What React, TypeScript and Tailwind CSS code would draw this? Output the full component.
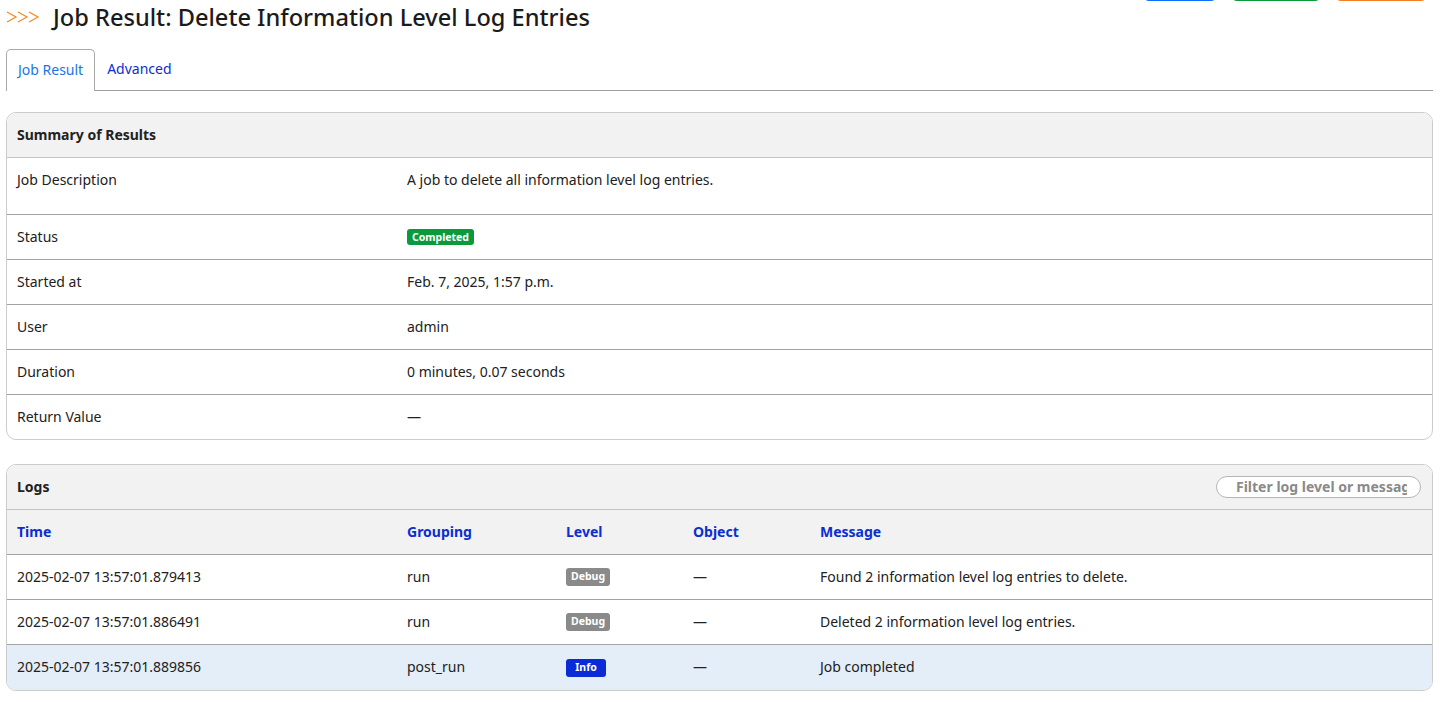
import React from "react";

const font = { fontFamily: '"Noto Sans", "Open Sans", sans-serif' };

function Badge({ children, color, w }: { children: React.ReactNode; color: string; w: string }) {
  return (
    <span className={`inline-flex items-center justify-center rounded-[3px] text-[10.5px] font-bold text-white ${color} ${w}`}>
      {children}
    </span>
  );
}

const summaryRows: { label: string; value: React.ReactNode; tall?: boolean }[] = [
  { label: "Job Description", value: "A job to delete all information level log entries.", tall: true },
  { label: "Status", value: <Badge color="bg-[#0b9a3b]" w="w-[67px] h-[16px]">Completed</Badge> },
  { label: "Started at", value: "Feb. 7, 2025, 1:57 p.m." },
  { label: "User", value: "admin" },
  { label: "Duration", value: "0 minutes, 0.07 seconds" },
  { label: "Return Value", value: "—" },
];

const logs = [
  { time: "2025-02-07 13:57:01.879413", grouping: "run", level: "Debug", msg: "Found 2 information level log entries to delete." },
  { time: "2025-02-07 13:57:01.886491", grouping: "run", level: "Debug", msg: "Deleted 2 information level log entries." },
  { time: "2025-02-07 13:57:01.889856", grouping: "post_run", level: "Info", msg: "Job completed" },
];

export default function App() {
  return (
    <div className="min-h-screen bg-white text-[14px] text-[#212121]" style={font}>
      <div className="pl-[6px] pr-[10px]">
        {/* Header */}
        <div className="flex items-start justify-between">
          <div className="flex h-[34px] items-center gap-[13px]">
            <svg width="34" height="12" viewBox="0 0 34 12" fill="none" stroke="#f7861f" strokeWidth="1.2">
              <polyline points="1,1 10,6 1,11" />
              <polyline points="12,1 21,6 12,11" />
              <polyline points="23,1 32,6 23,11" />
            </svg>
            <h1 className="text-[23.6px] font-medium leading-[34px] text-[#1b1b1b]">
              Job Result: Delete Information Level Log Entries
            </h1>
          </div>
          <div className="-mt-[35px] flex gap-[14px] pr-[6px]">
            <div className="h-[36px] w-[74px] rounded-[6px] border-b-[2px] border-[#0d6efd]" />
            <div className="h-[36px] w-[90px] rounded-[6px] border-b-[2px] border-[#0a9a3a]" />
            <div className="h-[36px] w-[92px] rounded-[6px] border-b-[2px] border-[#f57c20]" />
          </div>
        </div>

        {/* Tabs */}
        <div className="mt-[15px] flex border-b border-[#9e9e9e]">
          <div className="-mb-px flex h-[42px] items-center rounded-t-[5px] border border-b-0 border-[#a8a8a8] bg-white px-[11px] pb-[2px] text-[#1a73e8]">
            Job Result
          </div>
          <div className="flex h-[41px] items-center px-[12px] pb-[2px] text-[#0a2fd0]">Advanced</div>
        </div>

        {/* Summary card */}
        <div className="mt-[21px] overflow-hidden rounded-[10px] border border-[#cccccc]">
          <div className="flex h-[45px] items-center border-b border-[#c4c4c4] bg-[#f2f2f2] px-[10px] pb-[2px] font-bold">
            Summary of Results
          </div>
          {summaryRows.map((r, i) => (
            <div
              key={r.label}
              className={`grid grid-cols-[390px_1fr] ${i < summaryRows.length - 1 ? "border-b border-[#a3a3a3]" : ""}`}
            >
              <div className={`px-[10px] pt-[12px] leading-[20px] ${r.tall ? "pb-[24px]" : "pb-[12px]"}`}>{r.label}</div>
              <div className={`flex items-center px-[10px] pt-[12px] leading-[20px] ${r.tall ? "pb-[24px]" : "pb-[12px]"}`}>
                {r.value}
              </div>
            </div>
          ))}
        </div>

        {/* Logs card */}
        <div className="mt-[24px] overflow-hidden rounded-[10px] border border-[#cccccc]">
          <div className="flex h-[45px] items-center justify-between border-b border-[#c4c4c4] bg-[#f2f2f2] pl-[10px] pr-[11px] font-bold">
            <span className="pb-[2px]">Logs</span>
            <div className="flex h-[22px] w-[205px] items-center rounded-full border border-[#b5b5b5] bg-white pl-[19px] pr-[13px]">
              <span className="overflow-hidden whitespace-nowrap pb-[1px] text-[14px] font-bold text-[#8a8a8a]">
                Filter log level or message
              </span>
            </div>
          </div>
          <div className="grid h-[45px] grid-cols-[390px_159px_127px_127px_1fr] items-center border-b border-[#a3a3a3] bg-[#f2f2f2] pb-[2px] font-bold text-[#0a2fd0]">
            <div className="px-[10px]">Time</div>
            <div className="px-[10px]">Grouping</div>
            <div className="px-[10px]">Level</div>
            <div className="px-[10px]">Object</div>
            <div className="px-[10px]">Message</div>
          </div>
          {logs.map((l, i) => (
            <div
              key={l.time}
              className={`grid h-[45px] grid-cols-[390px_159px_127px_127px_1fr] items-center pb-[2px] ${
                i < logs.length - 1 ? "border-b border-[#a3a3a3]" : ""
              } ${l.level === "Info" ? "bg-[#e4eef8]" : ""}`}
            >
              <div className="px-[10px]">{l.time}</div>
              <div className="px-[10px]">{l.grouping}</div>
              <div className="flex px-[10px] pt-[2px]">
                {l.level === "Info" ? (
                  <Badge color="bg-[#0a2bd6]" w="w-[40px] h-[18px]">Info</Badge>
                ) : (
                  <Badge color="bg-[#8a8a8a]" w="w-[44px] h-[18px]">Debug</Badge>
                )}
              </div>
              <div className="px-[10px]">—</div>
              <div className="px-[10px]">{l.msg}</div>
            </div>
          ))}
        </div>
      </div>
    </div>
  );
}
